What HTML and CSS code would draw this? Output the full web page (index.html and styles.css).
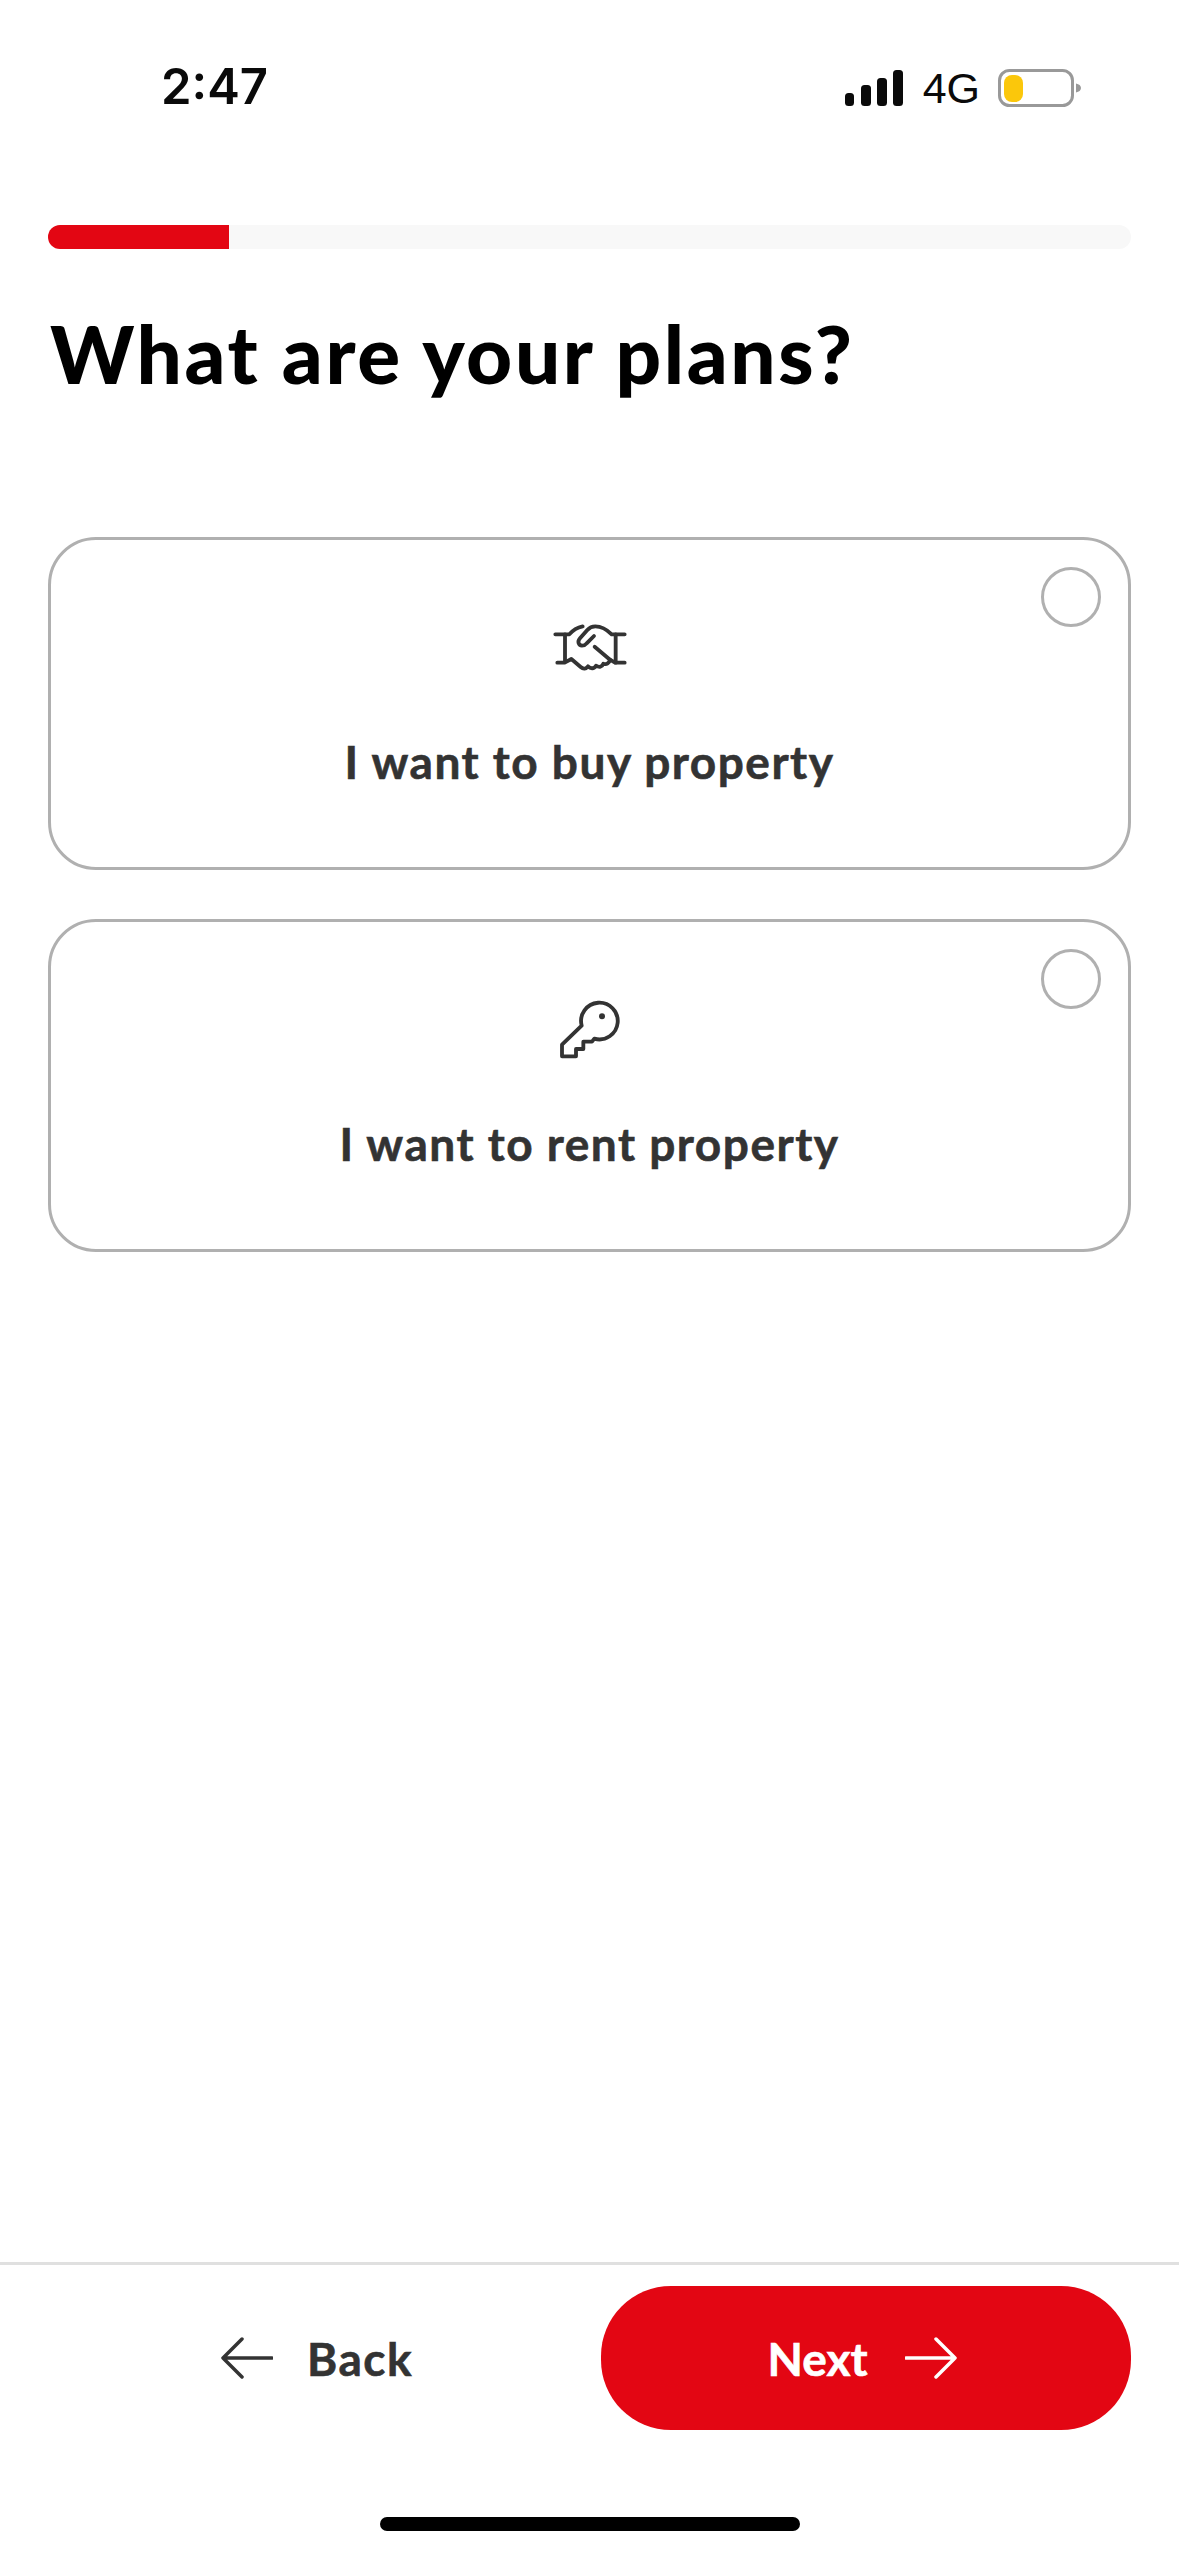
FILE: index.html
```html
<!DOCTYPE html>
<html lang="en">
<head>
<meta charset="utf-8">
<title>What are your plans?</title>
<link rel="stylesheet" href="styles.css">
</head>
<body>
<div class="page">
  <header class="status">
    <span class="time">2:47</span>
    <div class="status-right">
      <svg class="signal" width="58" height="36" viewBox="0 0 58 36"><rect x="0" y="23" width="9" height="13" rx="3.5"/><rect x="16" y="15" width="10" height="21" rx="3.5"/><rect x="32" y="8" width="10" height="28" rx="3.5"/><rect x="48" y="0" width="10" height="36" rx="3.5"/></svg>
      <span class="net">4G</span>
      <svg class="battery" width="84" height="38" viewBox="0 0 84 38"><rect x="1.5" y="1.5" width="73" height="35" rx="10" fill="none" stroke="#999" stroke-width="3"/><rect x="6" y="6" width="19" height="27" rx="8" fill="#fbc70b"/><path d="M78 14.5c3 .6 5 2.2 5 4.5s-2 3.900-5 4.500z" fill="#999"/></svg>
    </div>
  </header>
  <div class="progress"><div class="progress-fill"></div></div>
  <h1 class="title">What are your plans?</h1>
  <div class="options">
    <div class="card">
      <span class="radio"></span>
      <svg class="card-icon" width="120" height="80" viewBox="0 0 360 240" fill="none" stroke="#333" stroke-width="11.500" stroke-linecap="round" stroke-linejoin="round">
        <path d="M76 100H118C130 86 144 79 158 76"/>
        <path d="M105 100V180"/>
        <path d="M82 185H104L124 174L152 198C160 205 168 204 174 196C182 204 192 204 198 194C208 200 216 198 220 188C230 192 238 186 240 176L194 137"/>
        <path d="M284 100H245C230 85 215 76 196 76C186 76 178 80 172 87L150 112C141 122 146 133 156 134C162 134 166 132 170 127L192 105"/>
        <path d="M257 100V185"/>
        <path d="M284 185H255L240 176"/>
      </svg>
      <span class="card-label">I want to buy property</span>
    </div>
    <div class="card">
      <span class="radio"></span>
      <svg class="card-icon" width="120" height="80" viewBox="0 0 360 240" fill="none" stroke="#333" stroke-width="11.500" stroke-linecap="round" stroke-linejoin="round">
        <path d="M155 128A55 55 0 1 1 193 167L186 176H160V198H138V220H96V185Z"/>
        <circle cx="216" cy="100" r="9" fill="#333" stroke="none"/>
      </svg>
      <span class="card-label">I want to rent property</span>
    </div>
  </div>
  <footer class="footer">
    <div class="actions">
      <div class="back">
        <svg width="52" height="42" viewBox="0 0 52 42" fill="none" stroke="#333" stroke-width="3.500" stroke-linecap="round" stroke-linejoin="round"><path d="M51 21H2M21 2L2 21L21 40"/></svg>
        <span>Back</span>
      </div>
      <div class="next">
        <span>Next</span>
        <svg width="52" height="42" viewBox="0 0 52 42" fill="none" stroke="#fff" stroke-width="3.500" stroke-linecap="round" stroke-linejoin="round"><path d="M1 21H50M31 2L50 21L31 40"/></svg>
      </div>
    </div>
    <div class="home-bar"></div>
  </footer>
</div>
</body>
</html>
```

FILE: styles.css
```css
* { box-sizing: border-box; }
html, body { margin: 0; padding: 0; background: #fff; }
.page {
  width: 1179px;
  height: 2556px;
  display: flex;
  flex-direction: column;
  font-family: "Lato", "Liberation Sans", sans-serif;
  overflow: hidden;
}
.status {
  height: 225px;
  padding: 57px 0 0 161px;
  display: flex;
  justify-content: space-between;
  align-items: flex-start;
}
.time {
  font: 600 49px/60px "Inter", "Liberation Sans", sans-serif;
  color: #0a0a0a;
}
.status-right {
  display: flex;
  align-items: center;
  margin: 12px 97px 0 0;
  height: 38px;
}
.signal { fill: #0a0a0a; display: block; margin-right: 20px; }
.net {
  font: 400 43px/38px "Liberation Sans", sans-serif;
  color: #0a0a0a;
  margin-right: 18px;
}
.battery { display: block; }
.progress {
  margin: 0 48px;
  height: 24px;
  border-radius: 12px;
  background: #f8f8f8;
  overflow: hidden;
}
.progress-fill {
  width: 181px;
  height: 24px;
  background: #e30613;
}
.title {
  margin: 54px 0 0 50px;
  font-size: 80px;
  line-height: 100px;
  font-weight: 900;
  letter-spacing: 2.6px;
  color: #000;
}
.options {
  margin: 134px 48px 0;
  display: flex;
  flex-direction: column;
  gap: 49px;
}
.card {
  position: relative;
  height: 333px;
  border: 3px solid #b0b0b0;
  border-radius: 48px;
  padding-top: 61px;
  display: flex;
  flex-direction: column;
  align-items: center;
}
.card-icon { display: block; }
.card-label {
  margin-top: 49px;
  font-size: 46px;
  line-height: 64px;
  font-weight: 700;
  letter-spacing: 1.5px;
  -webkit-text-stroke: 0.6px #333;
  color: #333;
}
.radio {
  position: absolute;
  top: 27px;
  right: 27px;
  width: 60px;
  height: 60px;
  border: 3px solid #b0b0b0;
  border-radius: 50%;
}
.footer {
  margin-top: auto;
  border-top: 3px solid #e0e0e0;
  height: 294px;
  padding-top: 21px;
  display: flex;
  flex-direction: column;
}
.actions {
  display: flex;
  padding: 0 48px;
  height: 144px;
}
.back {
  width: 553px;
  display: flex;
  align-items: center;
  justify-content: center;
  gap: 34px;
  padding-right: 15px;
  font-size: 46px;
  font-weight: 700;
  letter-spacing: 1.5px;
  -webkit-text-stroke: 0.6px #333;
  color: #333;
}
.back svg, .next svg { display: block; flex: none; }
.next {
  width: 530px;
  height: 144px;
  border-radius: 70px;
  background: #e30613;
  display: flex;
  align-items: center;
  justify-content: center;
  gap: 37px;
  padding-right: 8px;
  font-size: 46px;
  font-weight: 700;
  -webkit-text-stroke: 0.6px #fff;
  color: #fff;
}
.home-bar {
  width: 420px;
  height: 14px;
  border-radius: 7px;
  background: #000;
  margin: 87px auto 0;
}
```
